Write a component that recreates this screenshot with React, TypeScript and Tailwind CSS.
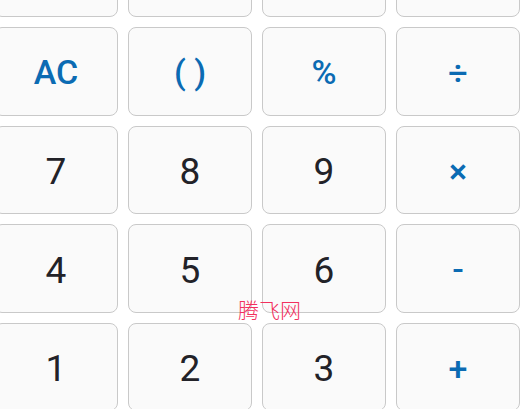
import React from "react";

type Key = { label: string; op?: boolean };

const keys: Key[] = [
  { label: "" }, { label: "" }, { label: "" }, { label: "" },
  { label: "AC", op: true }, { label: "( )", op: true }, { label: "%", op: true }, { label: "÷", op: true },
  { label: "7" }, { label: "8" }, { label: "9" }, { label: "×", op: true },
  { label: "4" }, { label: "5" }, { label: "6" }, { label: "-", op: true },
  { label: "1" }, { label: "2" }, { label: "3" }, { label: "+", op: true },
];

export default function App() {
  return (
    <div className="relative w-[523px] h-[409px] overflow-hidden bg-white font-['Roboto',sans-serif]">
      <div className="grid grid-cols-[repeat(4,124px)] auto-rows-[88.5px] gap-x-[10px] gap-y-[10px] -ml-[6px] -mt-[71.5px]">
        {keys.map((k, i) => (
          <button
            key={i}
            className={
              k.op
                ? "flex items-center justify-center pt-[3px] rounded-lg border border-[#c9c9c9] bg-[#fafafa] text-[34px] font-medium text-[#0b6bb3]"
                : "flex items-center justify-center pt-[4px] rounded-lg border border-[#c9c9c9] bg-[#fafafa] text-[37px] text-[#222228]"
            }
          >
            {k.label}
          </button>
        ))}
      </div>
      <div className="absolute left-[238px] top-[299px] text-[21px] leading-none text-[#f2305e] font-['Noto_Sans_CJK_SC',sans-serif] font-light">
        腾飞网
      </div>
    </div>
  );
}
